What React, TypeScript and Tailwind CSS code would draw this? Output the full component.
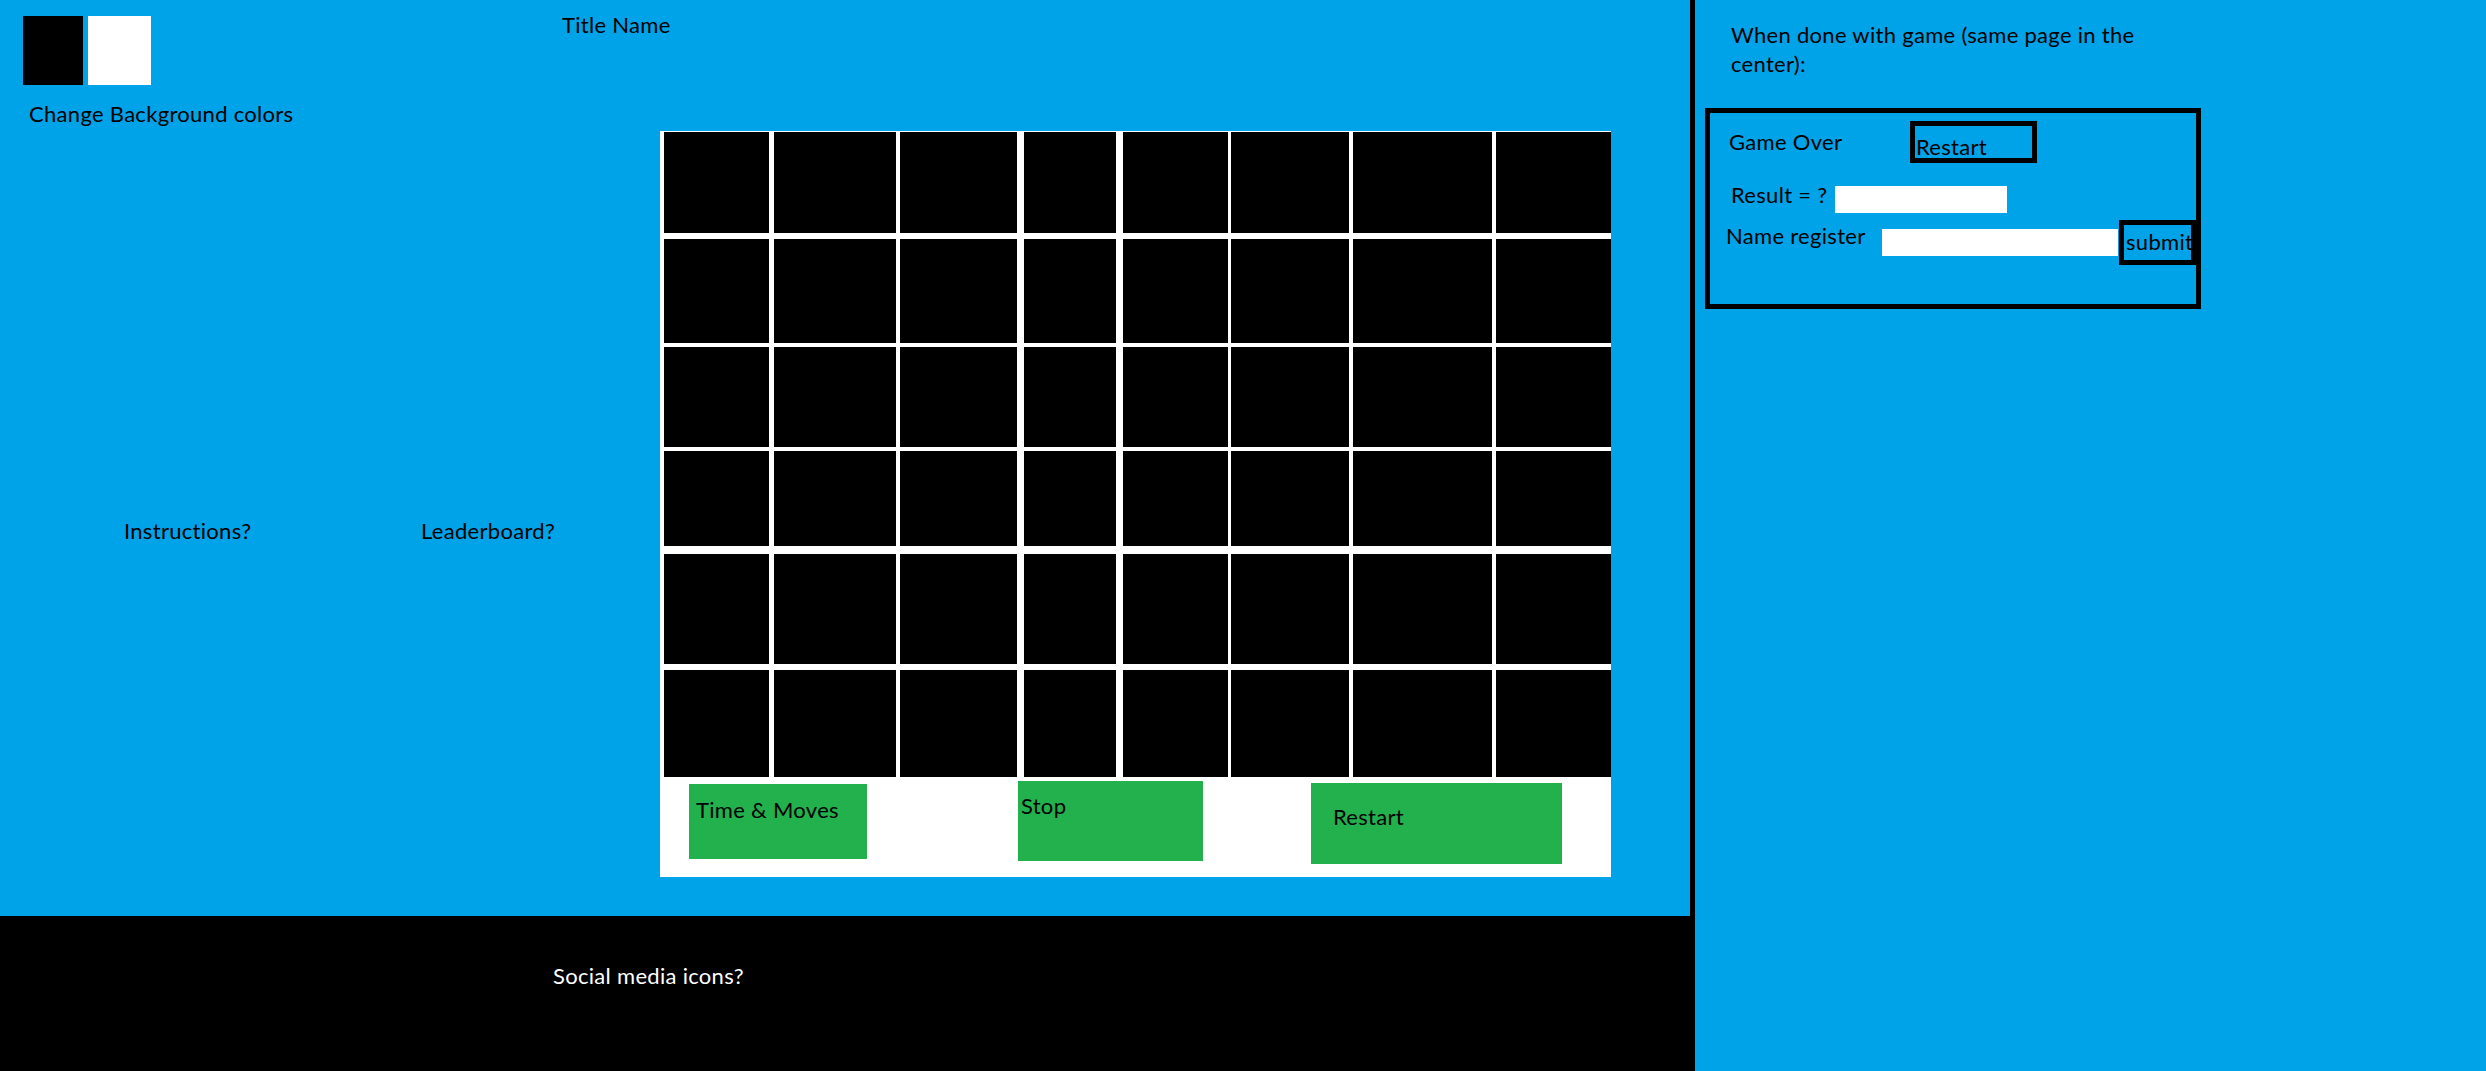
import React from "react";

const ROW_TRACKS = 11;
const COL_TRACKS = 15;

function Board() {
  const cells: React.ReactNode[] = [];
  for (let r = 0; r < ROW_TRACKS; r++) {
    for (let c = 0; c < COL_TRACKS; c++) {
      const isCell = r % 2 === 0 && c % 2 === 0;
      cells.push(<div key={`${r}-${c}`} className={isCell ? "bg-black" : ""} />);
    }
  }
  return (
    <div className="grid grid-cols-[105px_5px_122px_4px_117px_7px_92px_7px_105px_3px_118px_4px_139px_4px_115px] grid-rows-[101px_6px_104px_4px_100px_4px_95px_8px_110px_6px_107px]">
      {cells}
    </div>
  );
}

export default function App() {
  return (
    <div className="flex h-[1071px] w-[2486px] overflow-hidden font-['Lato','Open_Sans',sans-serif] text-[22px] leading-[24px] tracking-[0.3px] text-black">
      <div className="flex w-[1690px] flex-col">
        <main className="flex h-[916px] flex-col bg-[#00a2e8]">
          <header className="flex h-[131px] items-start">
            <div className="flex w-[562px] flex-col pl-[23px] pt-[16px]">
              <div className="flex gap-[5px]">
                <button aria-label="Black background" className="h-[69px] w-[60px] bg-black" />
                <button aria-label="White background" className="h-[69px] w-[63px] bg-white" />
              </div>
              <div className="ml-[6px] mt-[17px] whitespace-nowrap">Change Background colors</div>
            </div>
            <h1 className="mt-[13px] whitespace-nowrap font-normal">Title Name</h1>
          </header>

          <div className="flex items-start">
            <div className="flex w-[660px] items-start pl-[124px] pt-[388px]">
              <div className="w-[297px] whitespace-nowrap">Instructions?</div>
              <div className="whitespace-nowrap">Leaderboard?</div>
            </div>

            <div className="flex w-[951px] flex-col bg-white">
              <div className="pl-[4px] pt-[1px]">
                <Board />
              </div>
              <div className="flex h-[100px] items-start">
                <div className="ml-[29px] mt-[7px] h-[75px] w-[178px] whitespace-nowrap bg-[#22b14c] pl-[7px] pt-[14px]">
                  Time &amp; Moves
                </div>
                <button className="ml-[151px] mt-[4px] flex h-[80px] w-[185px] items-start bg-[#22b14c] pl-[3px] pt-[13px] text-left">
                  Stop
                </button>
                <button className="ml-[108px] mt-[6px] flex h-[81px] w-[251px] items-start bg-[#22b14c] pl-[22px] pt-[22px] text-left">
                  Restart
                </button>
              </div>
            </div>
          </div>
        </main>
        <footer className="h-[155px] bg-black pl-[553px] pt-[48px] text-white">
          <span className="whitespace-nowrap">Social media icons?</span>
        </footer>
      </div>

      <div className="w-[5px] bg-black" />

      <aside className="flex flex-1 flex-col bg-[#00a2e8]">
        <div className="pl-[36px] pt-[20px] leading-[29px]">
          When done with game (same page in the
          <br />
          center):
        </div>
        <div className="ml-[10px] mt-[30px] flex h-[201px] w-[496px] flex-col border-[5px] border-black">
          <div className="mt-[8px] flex items-start pl-[19px]">
            <div className="mt-[9px] w-[181px] whitespace-nowrap">Game Over</div>
            <button className="flex h-[42px] w-[127px] items-start border-[5px] border-black pl-[1px] pt-[9px] text-left">
              Restart
            </button>
          </div>
          <div className="mt-[20px] flex items-start pl-[21px]">
            <div className="w-[104px] whitespace-nowrap">Result = ?</div>
            <input aria-label="Result" readOnly className="mt-[3px] h-[27px] w-[172px] bg-white outline-none" />
          </div>
          <div className="mt-[7px] flex items-start pl-[16px]">
            <div className="mt-[4px] w-[156px] whitespace-nowrap">Name register</div>
            <input aria-label="Name" className="mt-[9px] h-[27px] w-[236px] bg-white outline-none" />
            <button className="ml-[1px] flex h-[45px] w-[77px] items-start overflow-hidden whitespace-nowrap border-[5px] border-black pl-[2px] pt-[5px] text-left">
              submit
            </button>
          </div>
        </div>
      </aside>
    </div>
  );
}
